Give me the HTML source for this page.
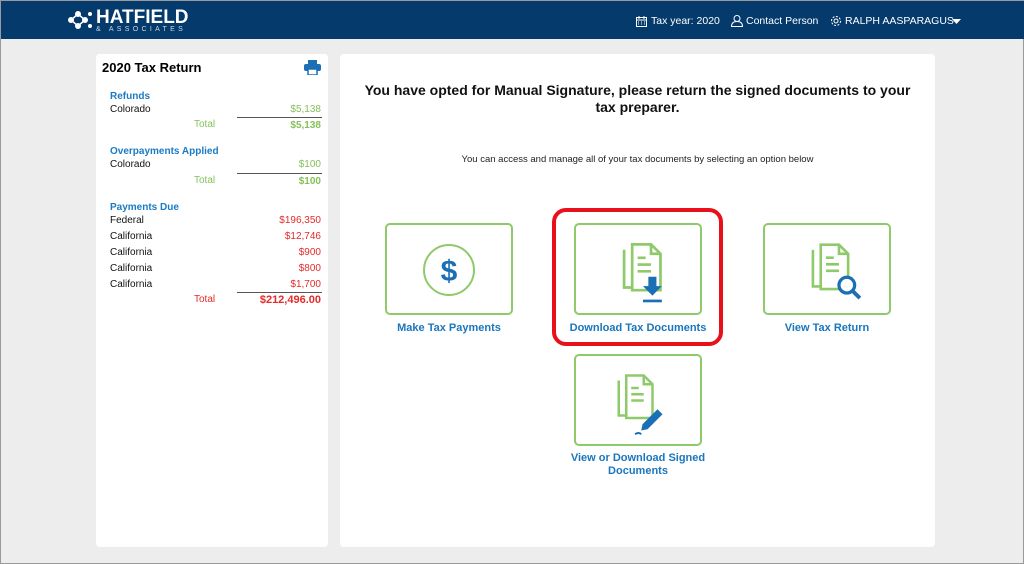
<!DOCTYPE html>
<html><head><style>
*{box-sizing:border-box;margin:0;padding:0}
body{width:1024px;height:564px;background:#ededed;font-family:"Liberation Sans",sans-serif;position:relative;overflow:hidden;border:1px solid #9a9a9a}
.hdr{position:absolute;left:0;top:0;width:1024px;height:38px;background:#053a6c;color:#fff;font-family:"Liberation Sans",sans-serif}
.abs{position:absolute}
.card{position:absolute;background:#fff;border-radius:4px}
.lbl{position:absolute;font-size:10px;color:#111}
.sec{position:absolute;font-size:10px;font-weight:bold;color:#1a7bc4}
.r{position:absolute;font-size:10px;text-align:right;right:7px}
.g{color:#86c05a}.red{color:#e42a2a}
.line{position:absolute;left:141px;width:85px;border-top:1px solid #555}
.box{position:absolute;width:128px;height:92px;border:2px solid #8fca6a;border-radius:5px;background:#fff}
.cap{position:absolute;font-size:11px;font-weight:bold;color:#1a76bd;text-align:center;width:200px}
</style></head><body>
<div class="hdr">
 <svg class="abs" style="left:66px;top:9px" width="26" height="20" viewBox="0 0 26 20"><g fill="#fff"><circle cx="4" cy="10" r="3"/><circle cx="11" cy="4" r="3"/><circle cx="11" cy="16" r="3"/><circle cx="18" cy="10" r="3"/><circle cx="23" cy="4" r="2"/><circle cx="23" cy="16" r="2"/></g><path d="M4 10L11 4L18 10L11 16Z" stroke="#fff" fill="none" stroke-width="1.5"/></svg>
 <div class="abs" style="left:95px;top:6px;font-size:19px;font-weight:bold">HATFIELD</div>
 <div class="abs" style="left:95px;top:25px;font-size:7px;letter-spacing:3.3px;color:#cfd8e3">&amp; ASSOCIATES</div>
 <svg class="abs" style="left:635px;top:15px" width="11" height="11" viewBox="0 0 11 11"><rect x="0.5" y="1.5" width="10" height="9" fill="none" stroke="#fff"/><path d="M0.5 4h10M3 0v3M8 0v3" stroke="#fff"/><path d="M2 6h1M5 6h1M8 6h1M2 8h1M5 8h1M8 8h1" stroke="#fff"/></svg>
 <div class="abs" style="left:650px;top:14px;font-size:10.5px">Tax year: 2020</div>
 <svg class="abs" style="left:730px;top:14px" width="12" height="12" viewBox="0 0 12 12"><circle cx="6" cy="3.5" r="3" fill="none" stroke="#fff"/><path d="M0.5 11.5q0-5 5.5-5t5.5 5Z" fill="none" stroke="#fff"/></svg>
 <div class="abs" style="left:745px;top:14px;font-size:10.5px">Contact Person</div>
 <svg class="abs" style="left:829px;top:14px" width="12" height="12" viewBox="0 0 12 12"><circle cx="6" cy="6" r="2" fill="none" stroke="#fff"/><circle cx="6" cy="6" r="4.5" fill="none" stroke="#fff" stroke-dasharray="2 1.5"/></svg>
 <div class="abs" style="left:844px;top:14px;font-size:10.5px">RALPH AASPARAGUS</div>
 <svg class="abs" style="left:951px;top:18px" width="9" height="6"><path d="M0 0h9L4.5 5Z" fill="#fff"/></svg>
</div>
<div class="card" style="left:95px;top:53px;width:232px;height:493px">
 <div class="abs" style="left:6px;top:6px;font-size:13px;font-weight:bold">2020 Tax Return</div>
 <svg class="abs" style="left:208px;top:6px" width="17" height="15" viewBox="0 0 17 15"><rect x="4" y="0" width="9" height="4" fill="#1a6fb5"/><rect x="0" y="4" width="17" height="7" rx="2" fill="#1a6fb5"/><rect x="4" y="9" width="9" height="6" fill="#fff" stroke="#1a6fb5" stroke-width="1.5"/></svg>
 <div class="sec" style="left:14px;top:37px">Refunds</div>
 <div class="lbl" style="left:14px;top:50px">Colorado</div><div class="r g" style="top:50px">$5,138</div>
 <div class="line" style="top:63px"></div>
 <div class="lbl g" style="left:98px;top:65px">Total</div><div class="r g" style="top:66px;font-weight:bold">$5,138</div>
 <div class="sec" style="left:14px;top:92px">Overpayments Applied</div>
 <div class="lbl" style="left:14px;top:105px">Colorado</div><div class="r g" style="top:105px">$100</div>
 <div class="line" style="top:119px"></div>
 <div class="lbl g" style="left:98px;top:121px">Total</div><div class="r g" style="top:122px;font-weight:bold">$100</div>
 <div class="sec" style="left:14px;top:148px">Payments Due</div>
 <div class="lbl" style="left:14px;top:161px">Federal</div><div class="r red" style="top:161px">$196,350</div>
 <div class="lbl" style="left:14px;top:177px">California</div><div class="r red" style="top:177px">$12,746</div>
 <div class="lbl" style="left:14px;top:193px">California</div><div class="r red" style="top:193px">$900</div>
 <div class="lbl" style="left:14px;top:209px">California</div><div class="r red" style="top:209px">$800</div>
 <div class="lbl" style="left:14px;top:225px">California</div><div class="r red" style="top:225px">$1,700</div>
 <div class="line" style="top:238px"></div>
 <div class="lbl red" style="left:98px;top:240px">Total</div><div class="r red" style="top:240px;font-weight:bold;font-size:11px">$212,496.00</div>
</div>
<div class="card" style="left:339px;top:53px;width:595px;height:493px">
 <div class="abs" style="left:0;top:28px;width:595px;text-align:center;font-size:14px;font-weight:bold;line-height:17px;color:#111">You have opted for Manual Signature, please return the signed documents to your<br>tax preparer.</div>
 <div class="abs" style="left:0;top:100px;width:595px;text-align:center;font-size:9.5px;color:#222">You can access and manage all of your tax documents by selecting an option below</div>
</div>
<div class="abs" style="left:551px;top:207px;width:171px;height:138px;border:4px solid #e8101a;border-radius:14px"></div>
<div class="box" style="left:384px;top:222px"><svg class="abs" style="left:35px;top:18px" width="54" height="54"><circle cx="27" cy="27" r="25" fill="none" stroke="#8fca6a" stroke-width="2"/><text x="27" y="38" text-anchor="middle" font-family="Liberation Sans" font-weight="bold" font-size="30" fill="#1a6fb5">$</text></svg></div>
<div class="cap" style="left:348px;top:321px">Make Tax Payments</div>
<svg width="0" height="0"><defs><g id="doc"><path d="M3 5v28h22" fill="none" stroke="#8fca6a" stroke-width="2"/><path d="M9 1h14l7 7v27H9Z" fill="#fff" stroke="#8fca6a" stroke-width="2"/><path d="M23 1v7h7" fill="none" stroke="#8fca6a" stroke-width="2"/><path d="M13 11h6M13 16h10M13 21h10" stroke="#8fca6a" stroke-width="2"/></g></defs></svg>
<div class="box" style="left:573px;top:222px"><svg class="abs" style="left:44px;top:18px" width="54" height="62" viewBox="0 0 40 46"><use href="#doc"/><path d="M21 25h6v7h4l-7 7-7-7h4Z" fill="#1a6fb5"/><rect x="17" y="42" width="14" height="2" fill="#1a6fb5"/></svg></div>
<div class="cap" style="left:537px;top:321px">Download Tax Documents</div>
<div class="box" style="left:762px;top:222px"><svg class="abs" style="left:44px;top:18px" width="60" height="66" viewBox="0 0 46 50"><use href="#doc"/><circle cx="29" cy="32" r="6" fill="#fff" stroke="#1a6fb5" stroke-width="2.5"/><path d="M33 36l6 6" stroke="#1a6fb5" stroke-width="3"/></svg></div>
<div class="cap" style="left:726px;top:321px">View Tax Return</div>
<div class="box" style="left:573px;top:353px"><svg class="abs" style="left:39px;top:18px" width="60" height="68" viewBox="0 0 48 54"><use href="#doc"/><path d="M22 40l12-12 4 4-12 12-5 1Z" fill="#1a6fb5"/><path d="M16 48q3-2 5 0" stroke="#1a6fb5" fill="none" stroke-width="1.5"/></svg></div>
<div class="cap" style="left:537px;top:451px;line-height:13px">View or Download Signed<br>Documents</div>
</body></html>
